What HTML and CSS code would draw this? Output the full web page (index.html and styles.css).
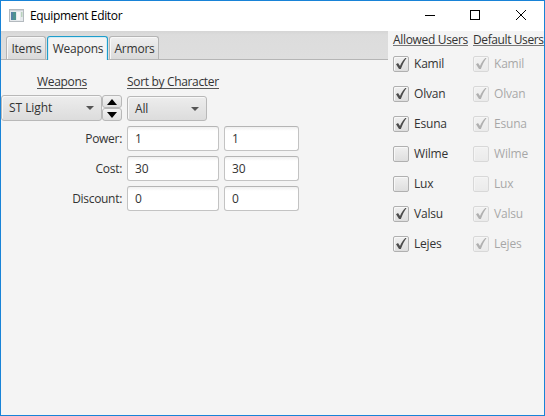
FILE: index.html
```html
<!DOCTYPE html>
<html lang="en">
<head>
<meta charset="utf-8">
<title>Equipment Editor</title>
<link rel="stylesheet" href="styles.css">
</head>
<body>
<svg width="0" height="0" class="defs"><symbol id="check" viewBox="0 0 16 16"><path d="M3 8.300 5 7 7 10C8.200 7 10 4.400 12.300 2H13.500C11.200 5.200 9.400 8.700 7.900 13H6Z" fill="#4c4c4c"/></symbol></svg>
<div class="window">
  <header class="titlebar">
    <svg class="app-icon" width="15" height="13" viewBox="0 0 15 13"><rect x=".5" y=".5" width="14" height="12" fill="#e6eaed" stroke="#b4babf"/><path d="M1 1.500H14" stroke="#cfd4d9"/><rect x="2" y="3" width="5" height="8" fill="#4f9390"/><path d="M2 3H4V11H2Z" fill="#5682a5"/><rect x="8" y="3" width="3" height="8" fill="#f8f8f8"/><rect x="12" y="3" width="1.500" height="5" fill="#b9d2bd"/></svg>
    <h1 class="title">Equipment Editor</h1>
    <svg class="controls" width="102" height="12" viewBox="0 0 102 12" fill="none" stroke="#000"><path d="M0 6.500H10"/><rect x="45.500" y="1.500" width="9" height="9"/><path d="M91 1 101 11M101 1 91 11"/></svg>
  </header>
  <div class="content">
    <main class="editor">
      <nav class="tabs">
        <span class="tab items">Items</span><span class="tab weapons active">Weapons</span><span class="tab armors">Armors</span>
      </nav>
      <div class="form">
        <div class="heading center"><u class="t-weapons">Weapons</u></div>
        <div class="heading"><u class="t-sort">Sort by Character</u></div>
        <div class="picker">
          <div class="combo wide"><span class="t-st">ST Light</span><i class="arrow"></i></div>
          <div class="spin">
            <button class="step"><svg width="10" height="6"><path d="M0 6 5 0 10 6Z"/></svg></button>
            <button class="step"><svg width="10" height="6"><path d="M0 0 5 6 10 0Z"/></svg></button>
          </div>
        </div>
        <div class="combo all"><span>All</span><i class="arrow"></i></div>
        <label class="name">Power:</label><div class="fields"><span class="field">1</span><span class="field small">1</span></div>
        <label class="name">Cost:</label><div class="fields"><span class="field">30</span><span class="field small">30</span></div>
        <label class="name">Discount:</label><div class="fields"><span class="field">0</span><span class="field small">0</span></div>
      </div>
    </main>
    <aside class="users">
      <div class="column">
        <u class="head">Allowed Users</u>
        <div class="user"><span class="box"><svg><use href="#check"/></svg></span>Kamil</div>
        <div class="user"><span class="box"><svg><use href="#check"/></svg></span>Olvan</div>
        <div class="user"><span class="box"><svg><use href="#check"/></svg></span>Esuna</div>
        <div class="user"><span class="box"></span>Wilme</div>
        <div class="user"><span class="box"></span>Lux</div>
        <div class="user"><span class="box"><svg><use href="#check"/></svg></span>Valsu</div>
        <div class="user"><span class="box"><svg><use href="#check"/></svg></span>Lejes</div>
      </div>
      <div class="column">
        <u class="head default">Default Users</u>
        <div class="user off"><span class="box"><svg><use href="#check"/></svg></span>Kamil</div>
        <div class="user off"><span class="box"><svg><use href="#check"/></svg></span>Olvan</div>
        <div class="user off"><span class="box"><svg><use href="#check"/></svg></span>Esuna</div>
        <div class="user off"><span class="box"></span>Wilme</div>
        <div class="user off"><span class="box"></span>Lux</div>
        <div class="user off"><span class="box"><svg><use href="#check"/></svg></span>Valsu</div>
        <div class="user off"><span class="box"><svg><use href="#check"/></svg></span>Lejes</div>
      </div>
    </aside>
  </div>
</div>
</body>
</html>
```
FILE: styles.css
```css
* { box-sizing: border-box; }
body { margin: 0; font: 12px/16px "Open Sans", "Noto Sans", sans-serif; letter-spacing: -0.2px; color: #333; }
svg { display: block; flex: none; }
.defs { position: absolute; }
.window { width: 545px; height: 416px; border: 1px solid #1883d7; background: #f4f4f4; display: flex; flex-direction: column; overflow: hidden; }
.titlebar { height: 30px; flex: none; background: #fff; display: flex; align-items: center; padding: 0 17px 2px 8px; }
.title { margin: 0 auto 0 6px; padding-top: 2px; font-size: 12px; font-weight: 400; letter-spacing: -0.35px; color: #000; white-space: nowrap; }
.content { display: flex; flex: 1; }
.editor { width: 387px; flex: none; }
.tabs { height: 29px; padding: 5px 0 0 5px; display: flex; gap: 1px; background: linear-gradient(#d5d5d5, #dcdcdc 4px, #dedede); border-bottom: 1px solid #b5b5b5; }
.tab { height: 23px; border: 1px solid #b5b5b5; border-bottom: 0; border-radius: 3px 3px 0 0; background: linear-gradient(#efefef, #dadada); box-shadow: inset 1px 1px #f8f8f8; text-align: center; line-height: 24px; padding-left: 1px; white-space: nowrap; }
.items { width: 40px; }
.weapons { width: 61px; }
.armors { width: 50px; }
.tab.active { height: 24px; border-color: #1e9dcb; background: #f4f4f4; box-shadow: inset 1px 1px #d3edf6, inset -1px 0 #d3edf6; }
.form { display: grid; grid-template-columns: 121px 173px; column-gap: 5px; grid-template-rows: 18px 26px 25px 25px 25px; row-gap: 5px; padding-top: 12px; }
.heading { white-space: nowrap; line-height: 20px; }
.center { text-align: center; padding-left: 1px; }
u { text-decoration: none; }
.heading u { display: inline-block; line-height: 14px; height: 14px; margin-top: 3px; border-bottom: 1px solid #555; }
.t-weapons { letter-spacing: -0.3px; }
.t-sort { letter-spacing: -0.33px; }
.picker { display: flex; }
.combo { height: 26px; border: 1px solid #b8b8b8; border-radius: 3px; background: linear-gradient(#ededed, #dcdcdc); box-shadow: inset 1px 1px #f8f8f8; display: flex; align-items: center; justify-content: space-between; padding: 0 7px; white-space: nowrap; }
.t-st { letter-spacing: -0.05px; }
.wide { width: 101px; }
.all { width: 80px; margin-top: 1px; height: 25px; }
.arrow { border: 4px solid transparent; border-top-color: #555; border-bottom: 0; }
.spin { width: 20px; display: flex; flex-direction: column; }
.step { height: 13px; width: 20px; padding: 0; border: 1px solid #b8b8b8; border-radius: 3px; background: linear-gradient(#f3f3f3, #dedede); display: flex; align-items: center; justify-content: center; }
.name { text-align: right; line-height: 25px; letter-spacing: -0.3px; }
.fields { display: flex; gap: 5px; }
.field { width: 92px; height: 25px; border: 1px solid #c3c3c3; border-top-color: #b5b5b5; border-radius: 3px; background: linear-gradient(#f0f0f0, #fff 4px); padding-left: 7px; line-height: 24px; }
.small { width: 75px; }
.users { display: flex; padding-left: 5px; }
.column { width: 80px; flex: none; display: flex; flex-direction: column; gap: 14px; }
.head { height: 15px; line-height: 17px; border-bottom: 1px solid #777; white-space: nowrap; align-self: flex-start; margin-bottom: -4px; letter-spacing: -0.33px; }
.default { letter-spacing: -0.4px; }
.user { height: 16px; display: flex; gap: 5px; line-height: 16px; }
.box { width: 16px; height: 16px; flex: none; border: 1px solid #b0b0b0; border-radius: 2px; background: linear-gradient(#f0f0f0, #dedede); box-shadow: inset 1px 1px #f8f8f8; }
.box svg { width: 16px; height: 16px; margin: -1px; }
.off { opacity: .4; }
```
